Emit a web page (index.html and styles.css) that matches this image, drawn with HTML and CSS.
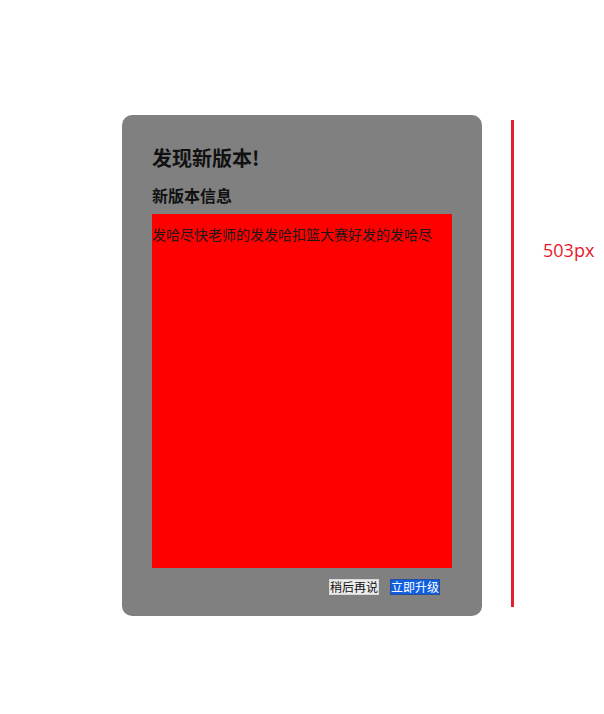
FILE: index.html
```html
<!DOCTYPE html>
<html lang="zh">
<head>
<meta charset="utf-8">
<title>发现新版本</title>
<link rel="stylesheet" href="styles.css">
</head>
<body>
<div class="page">
  <div class="card">
    <div class="title">发现新版本!</div>
    <div class="subtitle">新版本信息</div>
    <div class="content">发哈尽快老师的发发哈扣篮大赛好发的发哈尽</div>
    <div class="actions">
      <button class="btn btn-later">稍后再说</button>
      <button class="btn btn-upgrade">立即升级</button>
    </div>
  </div>
  <div class="ruler"></div>
  <div class="ruler-label">503px</div>
</div>
</body>
</html>
```
FILE: styles.css
```css
html, body {
  margin: 0;
  padding: 0;
  background: #ffffff;
}
.page {
  display: flex;
  align-items: flex-start;
  padding: 115px 0 0 122px;
}
.card {
  box-sizing: border-box;
  width: 360px;
  height: 501px;
  background: #808080;
  border-radius: 10px;
  padding: 29px 30px 0 30px;
  font-family: "Noto Sans CJK SC", "Noto Sans", sans-serif;
  color: #111;
}
.title {
  font-size: 20px;
  font-weight: bold;
  line-height: 28px;
}
.subtitle {
  margin-top: 12px;
  font-size: 16px;
  font-weight: bold;
  line-height: 22px;
}
.content {
  box-sizing: border-box;
  margin-top: 8px;
  width: 300px;
  height: 354px;
  background: #ff0000;
  padding-top: 10px;
  font-size: 14px;
  line-height: 20px;
  color: #1a1a1a;
}
.actions {
  display: flex;
  justify-content: flex-end;
  gap: 11px;
  padding-right: 12px;
  margin-top: 11px;
}
.btn {
  margin: 0;
  padding: 0;
  font-family: "Noto Sans CJK SC", sans-serif;
  font-size: 12px;
  line-height: 14px;
  height: 16px;
  border-width: 1px;
  border-style: solid;
  border-radius: 0;
}
.btn-later {
  background: #ececec;
  border-color: #d8d8d8;
  color: #111;
}
.btn-upgrade {
  background: #0f5fe0;
  border-color: #2a4f9a;
  color: #ffffff;
}
.ruler {
  width: 3px;
  height: 487px;
  margin: 5px 0 0 29px;
  background: #e3202c;
}
.ruler-label {
  margin: 123px 0 0 29px;
  font-family: "Open Sans", sans-serif;
  font-size: 18px;
  line-height: 25px;
  color: #e8192c;
}
```
